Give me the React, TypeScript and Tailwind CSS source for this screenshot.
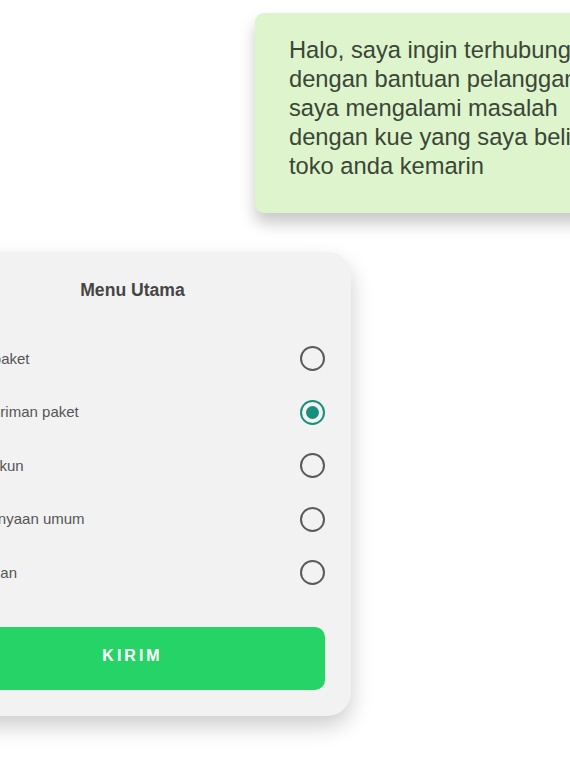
import { useState } from 'react';

const options = ['Cek paket', 'Pengiriman paket', 'Info akun', 'Pertanyaan umum', 'Keluhan'];

const bubbleLines = [
  'Halo, saya ingin terhubung',
  'dengan bantuan pelanggan,',
  'saya mengalami masalah',
  'dengan kue yang saya beli di',
  'toko anda kemarin',
];

export default function App() {
  const [selected, setSelected] = useState(1);

  return (
    <div className="w-[570px] h-[770px] overflow-hidden bg-white font-['Liberation_Sans',Arial,sans-serif]">
      <div className="pt-[13px] pl-[255px]">
        <div className="w-[360px] rounded-[9px] bg-[#def4cd] pt-[23px] pb-[32px] pl-[34px] text-[23.7px] leading-[29px] text-[#3a4636] shadow-[0_10px_16px_rgba(0,0,0,0.22)]">
          {bubbleLines.map((line) => (
            <div key={line} className="whitespace-nowrap">
              {line}
            </div>
          ))}
        </div>
      </div>

      <div className="ml-[-86px] mt-[39px] w-[437px] rounded-[24px] bg-[#f2f2f2] px-[26px] pt-[26px] pb-[26px] shadow-[0_10px_22px_rgba(0,0,0,0.2)]">
        <h2 className="text-center text-[17.6px] leading-[24px] font-bold text-[#454545]">Menu Utama</h2>

        <div className="mt-[30px]">
          {options.map((opt, i) => (
            <div
              key={opt}
              className="flex h-[53.5px] items-center justify-between pl-[22px] cursor-pointer"
              onClick={() => setSelected(i)}
            >
              <span className="text-[15px] text-[#555]">{opt}</span>
              {selected === i ? (
                <span className="flex h-[25px] w-[25px] items-center justify-center rounded-full border-2 border-[#178f7c]">
                  <span className="h-[13px] w-[13px] rounded-full bg-[#178f7c]" />
                </span>
              ) : (
                <span className="h-[25px] w-[25px] rounded-full border-2 border-[#5a5a5a]" />
              )}
            </div>
          ))}
        </div>

        <button className="mt-[27px] flex h-[63px] w-full items-center justify-center rounded-[10px] bg-[#25d366] pb-[5px] text-[16px] font-bold tracking-[3px] text-white">
          KIRIM
        </button>
      </div>
    </div>
  );
}
